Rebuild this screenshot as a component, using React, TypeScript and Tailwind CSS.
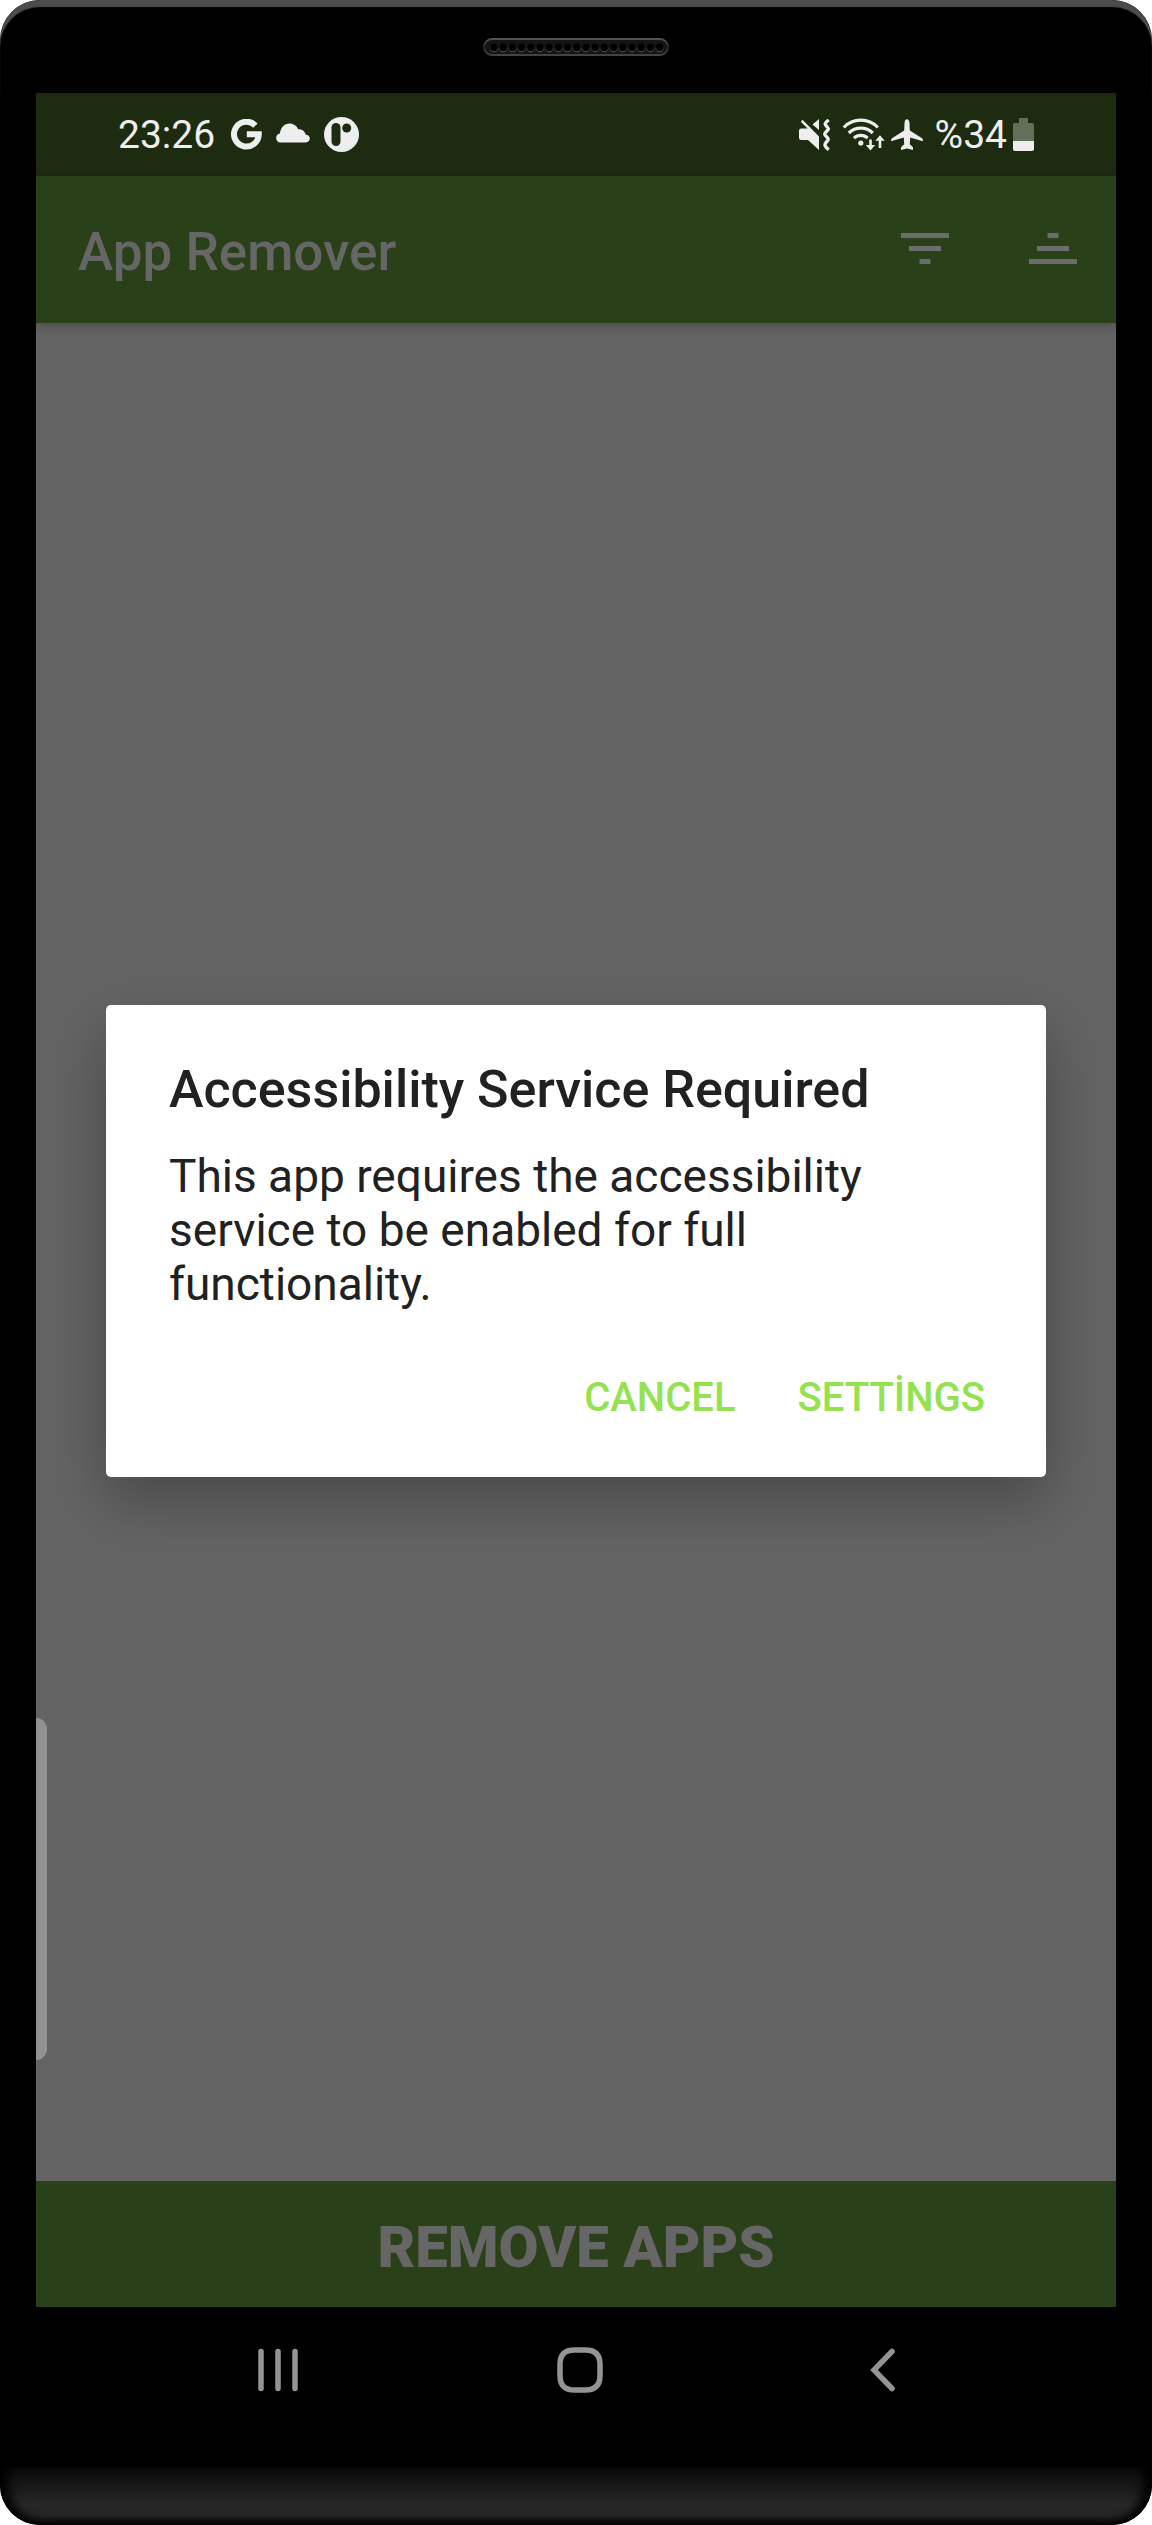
import React from "react";

const HOLES = Array.from({ length: 19 }, (_, i) => i);

function SpeakerGrille() {
  return (
    <svg width="186" height="18" viewBox="0 0 186 18" aria-hidden="true">
      <defs>
        <linearGradient id="grille-rim" x1="0" y1="0" x2="0" y2="1">
          <stop offset="0" stopColor="#555555" />
          <stop offset="0.5" stopColor="#222222" />
          <stop offset="1" stopColor="#444444" />
        </linearGradient>
        <linearGradient id="grille-hole" x1="0" y1="0" x2="0" y2="1">
          <stop offset="0.4" stopColor="#101010" />
          <stop offset="1" stopColor="#5a5a5a" />
        </linearGradient>
      </defs>
      <rect x="1" y="1" width="184" height="16" rx="8" fill="#151515" stroke="url(#grille-rim)" strokeWidth="2" />
      {HOLES.map((i) => (
        <ellipse key={i} cx={11 + i * 9.2} cy="9.5" rx="3.8" ry="4.2" fill="#000000" stroke="url(#grille-hole)" strokeWidth="1" />
      ))}
    </svg>
  );
}

function GoogleIcon() {
  return (
    <svg width="31" height="31" viewBox="0 0 31 31" fill="none" stroke="#eeeeee" strokeWidth="6" aria-hidden="true">
      <path d="M24.4 6.6A12.4 12.4 0 1 0 27.8 15.3H15.8" />
    </svg>
  );
}

function CloudIcon() {
  return (
    <svg width="34" height="34" viewBox="0 0 34 34" fill="#eeeeee" aria-hidden="true">
      <path d="M4.500 24.500a4.600 4.600 0 0 1-.6-9.100C4.500 9.600 8.500 5.500 13.500 5.500c4 0 7.400 2.400 8.800 5.900 3.600-.3 6.600 2 7.200 5.100 2.600.2 4.300 1.900 4.300 4.100s-1.700 3.900-4.100 3.900z" />
    </svg>
  );
}

function BadgeIcon() {
  return (
    <svg width="35" height="35" viewBox="0 0 35 35" aria-hidden="true">
      <circle cx="17.500" cy="17.500" r="17.500" fill="#eeeeee" />
      <rect x="7.500" y="6" width="9" height="23" rx="4.500" fill="#1d2b11" />
      <circle cx="22.700" cy="11" r="4.500" fill="#1d2b11" />
    </svg>
  );
}

function MuteVibrateIcon() {
  return (
    <svg width="31" height="32" viewBox="0 0 31 32" aria-hidden="true">
      <path fill="#eeeeee" d="M3.500.8 20 17.600V31L9 21H2Q0 21 0 19V11.500Q0 9.500 2 9.500H8.500L1.800 2.800Z" />
      <path fill="#eeeeee" d="M20 0V11L13.500 5.500Z" />
      <path
        d="M29.700 1C25 4.500 25.500 5.200 27.800 7.500 30 10 30 10 27 13 25 15 25.500 16 27.800 18 30 20.200 29.500 21 27 23.500 25 26 26 27.500 29.700 30.700"
        fill="none"
        stroke="#eeeeee"
        strokeWidth="3.400"
      />
    </svg>
  );
}

function WifiIcon() {
  return (
    <svg width="43" height="34" viewBox="0 0 43 34" fill="none" stroke="#eeeeee" strokeWidth="3.200" aria-hidden="true">
      <path d="M1.800 9.500A23.500 23.500 0 0 1 35.800 9.500" />
      <path d="M6.800 15A17 17 0 0 1 30.800 15" />
      <path d="M12 20.200A9.800 9.800 0 0 1 25.600 20.200" />
      <circle cx="18.800" cy="25" r="2.600" fill="#eeeeee" stroke="none" />
      <path strokeWidth="2.600" d="M28.500 21.500V30M38 30V20" />
      <path fill="#eeeeee" stroke="none" d="M23.800 27 28.500 32.500 33.200 27ZM33.300 22.800 38 17.300 42.700 22.800Z" />
    </svg>
  );
}

function PlaneIcon() {
  return (
    <svg width="32" height="32" viewBox="0 0 32 32" fill="#eeeeee" aria-hidden="true">
      <path d="M16 .3C17.300.3 18.300 1.500 18.500 4L18.800 11.500 31 19.300Q32 20 31.900 22.200L19.200 18.600 18.800 25.200 22 28.300 22 31 16 29.400 10 31 10 28.300 13.200 25.200 12.800 18.600.1 22.200Q0 20 1 19.300L13.200 11.500 13.500 4C13.700 1.500 14.700.3 16 .3Z" />
    </svg>
  );
}

function BatteryIcon() {
  return (
    <svg width="21" height="33" viewBox="0 0 21 33" aria-hidden="true">
      <path d="M6 0H15V5H19.500Q21 5 21 6.500V23H0V6.500Q0 5 1.500 5H6Z" fill="#646e5a" />
      <path d="M0 23H21V31Q21 33 19 33H2Q0 33 0 31Z" fill="#eeeeee" />
    </svg>
  );
}

function SortIcon({ ascending }: { ascending: boolean }) {
  return (
    <svg width="48" height="31" viewBox="0 0 48 31" fill="#6c6c6c" aria-hidden="true">
      <rect x={ascending ? 18.5 : 0} y="0" width={ascending ? 11 : 48} height="5" />
      <rect x="8" y="13" width="32" height="5" />
      <rect x={ascending ? 0 : 18.5} y="26" width={ascending ? 48 : 11} height="5" />
    </svg>
  );
}

function NavButton({ label, children }: { label: string; children: React.ReactNode }) {
  return (
    <button type="button" aria-label={label} className="flex flex-1 items-center justify-center">
      <svg width="48" height="48" viewBox="0 0 48 48" fill="none" stroke="#949494" strokeWidth="5.500" strokeLinecap="round" aria-hidden="true">
        {children}
      </svg>
    </button>
  );
}

export default function App() {
  return (
    <div className="bg-white font-[Roboto,sans-serif]">
      <div className="flex min-h-screen flex-col overflow-hidden rounded-[40px] bg-black">
        <div className="flex h-[93px] shrink-0 justify-center rounded-t-[40px] pt-[38px] shadow-[inset_0_7px_1px_#4c4c4c]">
          <SpeakerGrille />
        </div>

        <div className="mx-9 flex flex-1 flex-col">
          <div className="flex h-[83px] items-center justify-between bg-[#1d2b11] px-[82px] text-[39px] leading-[48px] text-[#eeeeee]">
            <div className="flex items-center gap-[14px]">
              <time className="pr-0.5">23:26</time>
              <GoogleIcon />
              <CloudIcon />
              <BadgeIcon />
            </div>
            <div className="flex items-center">
              <MuteVibrateIcon />
              <span className="ml-3">
                <WifiIcon />
              </span>
              <span className="ml-1.5">
                <PlaneIcon />
              </span>
              <span className="ml-3">%34</span>
              <span className="ml-1.5">
                <BatteryIcon />
              </span>
            </div>
          </div>

          <div className="relative flex flex-1 flex-col">
            <header className="z-0 flex h-[147px] items-center justify-between bg-[#2a4018] pr-[39px] pb-0.5 pl-[42px] shadow-[0_3px_10px_rgba(0,0,0,0.25)]">
              <h1 className="pt-1.5 text-[53px] leading-[62px] font-medium text-[#666666]">App Remover</h1>
              <div className="flex gap-20">
                <button type="button" aria-label="Sort descending">
                  <SortIcon ascending={false} />
                </button>
                <button type="button" aria-label="Sort ascending">
                  <SortIcon ascending />
                </button>
              </div>
            </header>

            <main className="flex-1 bg-[#646464]" />

            <button type="button" className="h-[126px] bg-[#2a4018] pt-1.5 text-[58px] leading-[68px] font-black text-[#666666]">
              REMOVE APPS
            </button>

            <div className="absolute bottom-[247px] left-0 h-[342px] w-[11px] rounded-r-[11px] bg-[#929292]" />

            <div className="absolute inset-0 flex items-center px-[70px] pb-0.5">
              <div
                role="dialog"
                aria-labelledby="dialog-title"
                aria-describedby="dialog-text"
                className="w-full rounded-[5px] bg-white pt-[54px] pr-[61px] pb-[55px] pl-[63px] shadow-[0_24px_60px_rgba(0,0,0,0.28)]"
              >
                <h2 id="dialog-title" className="text-[52px] leading-[62px] font-medium text-[#212121]">
                  Accessibility Service Required
                </h2>
                <p id="dialog-text" className="mt-7 text-[46px] leading-[54px] text-[#212121]">
                  This app requires the accessibility service to be enabled for full functionality.
                </p>
                <div className="mt-[63px] flex justify-end gap-[62px] text-[40px] leading-[48px] font-medium text-[#94e250]">
                  <button type="button">CANCEL</button>
                  <button type="button">SETTİNGS</button>
                </div>
              </div>
            </div>
          </div>

          <nav className="flex h-[160px] pr-[83px] pb-[34px] pl-[91px]">
            <NavButton label="Recent apps">
              <path d="M7 5.500V42.500M24 5.500V42.500M41 5.500V42.500" />
            </NavButton>
            <NavButton label="Home">
              <path d="M18.500 4H29.500Q44 4 44 18.500V29.500Q44 44 29.500 44H18.500Q4 44 4 29.500V18.500Q4 4 18.500 4Z" />
            </NavButton>
            <NavButton label="Back">
              <path d="M34 5.500 16 24 34 42.500" />
            </NavButton>
          </nav>
        </div>

        <div className="h-[58px] shrink-0 rounded-b-[40px] bg-linear-to-b from-[#0b0b0b] via-[#272727] via-65% to-[#262626] shadow-[inset_0_-4px_8px_#000000,inset_12px_0_12px_-4px_#000000,inset_-12px_0_12px_-4px_#000000]" />
      </div>
    </div>
  );
}
